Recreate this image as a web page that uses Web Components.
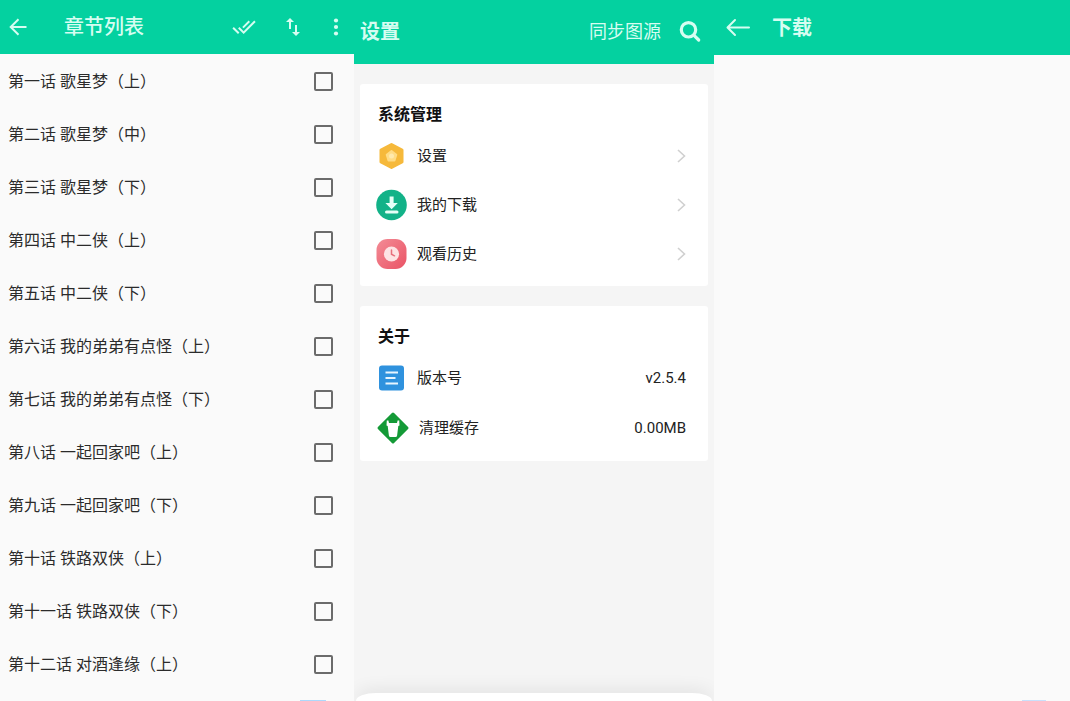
<!DOCTYPE html>
<html lang="zh-CN">
<head>
<meta charset="utf-8">
<meta name="viewport" content="width=device-width, initial-scale=1">
<title>设置</title>
<style>
  body {
    margin: 0;
    font-family: Roboto, "Noto Sans CJK SC", sans-serif;
    font-size: 16px;
    color: #2b2b2b;
    --brand: #04d1a0;
    --on-brand: #d6fdf1;
    --page: #fafafa;
    --page-muted: #f5f5f5;
  }
</style>
</head>
<body>
<comic-app></comic-app>
<script>
const define = (name, html, setup) => {
  const template = document.createElement('template');
  template.innerHTML = html;
  customElements.define(name, class extends HTMLElement {
    constructor() {
      super();
      this.attachShadow({ mode: 'open' }).append(template.content.cloneNode(true));
    }
    connectedCallback() {
      if (setup) setup(this, this.shadowRoot);
    }
  });
};

/* Icon set: name -> [viewBox, markup] */
const ICONS = {
  back: ['0 0 24 24', '<path fill="none" stroke="currentColor" stroke-width="2" d="M20.5 12H5M12.5 4.200L4.700 12l7.800 7.800"/>'],
  backLong: ['0 0 24 24', '<path fill="none" stroke="currentColor" stroke-width="2" stroke-linecap="round" stroke-linejoin="round" d="M23 11.500H2M9 4L1.500 11.500 9 19"/>'],
  doneAll: ['0 0 24 24', '<path fill="currentColor" d="M18 7l-1.410-1.410-6.340 6.340 1.410 1.410L18 7zm4.240-1.410L11.660 16.170 7.480 12l-1.410 1.410L11.660 19l12-12-1.420-1.410zM.410 13.410L6 19l1.410-1.410L1.830 12 .410 13.410z"/>'],
  swap: ['0 0 24 24', '<path fill="currentColor" d="M16 17.010V10h-2v7.010h-3L15 21l4-3.990h-3zM9 3L5 6.990h3V14h2V6.990h3L9 3z"/>'],
  more: ['0 0 24 24', '<g fill="currentColor"><circle cx="12" cy="5.500" r="2.100"/><circle cx="12" cy="12" r="2.100"/><circle cx="12" cy="18.500" r="2.100"/></g>'],
  search: ['0 0 22 22', '<g fill="none" stroke="currentColor" stroke-width="3.200" stroke-linecap="round"><circle cx="9.500" cy="8.800" r="7.200"/><path d="M15 14.300l4.700 4.700"/></g>'],
  chevron: ['0 0 9 14', '<path fill="none" stroke="#d0d0d0" stroke-width="1.600" d="M1 1l6.500 6L1 13"/>'],
  gear: ['0 0 32 32', '<path fill="#f6b93b" stroke="#f6b93b" stroke-width="3" stroke-linejoin="round" d="M15.500 4.500L26 10v12l-10.500 5.500L5 22V10z"/><path fill="#ffdc85" stroke="#ffdc85" stroke-width="2" stroke-linejoin="round" d="M15.500 11l4.800 3.700-1.800 5.800h-6l-1.800-5.800z"/><circle cx="15.500" cy="16" r="2.500" fill="#ffe9ad"/>'],
  download: ['0 0 32 32', '<circle cx="15.500" cy="16" r="15.300" fill="#12b288"/><path fill="#e4fff6" d="M13.600 7.500h4v6.500h4.200l-6.200 6.300-6.200-6.300h4.200z"/><rect x="9" y="21.500" width="13.500" height="3" rx="1.500" fill="#e4fff6"/>'],
  history: ['0 0 32 32', '<defs><linearGradient id="g" x1="0" y1="0" x2="1" y2="1"><stop offset="0" stop-color="#f38c96"/><stop offset="1" stop-color="#ea5365"/></linearGradient></defs><rect x=".5" y="1" width="30" height="30" rx="11" fill="url(#g)"/><circle cx="15.500" cy="16" r="7.600" fill="#fde3e4"/><path fill="none" stroke="#e8707d" stroke-width="1.500" stroke-linecap="round" d="M15.500 12v4.200l3 1.600"/>'],
  version: ['0 0 32 32', '<rect x="3" y="3.500" width="25" height="25" rx="3" fill="#2f92de"/><path stroke="#e8f5ff" stroke-width="2" d="M9.500 10.500h12.500M9.500 16h10M9.500 21.500h12.500"/>'],
  clean: ['0 0 34 34', '<path fill="#149a37" stroke="#149a37" stroke-width="3" stroke-linejoin="round" d="M17 3l14 14-14 14L3 17z"/><path fill="#fff" d="M10.800 9.500h1.600l.600 2.500h8l.600-2.500h1.600l.300 5-1.200.5-1.200 9.500q-.2 1.500-1.600 1.500h-5q-1.400 0-1.600-1.500L11.700 15l-1.200-.5z"/>'],
};

define('app-icon', `
  <style>
    :host { display: inline-flex; flex: none; }
    svg { display: block; }
  </style>
  <svg aria-hidden="true"></svg>`,
  (host, root) => {
    const [box, markup] = ICONS[host.getAttribute('name')];
    const svg = root.querySelector('svg');
    const [, , w, h] = box.split(' ');
    svg.setAttribute('viewBox', box);
    svg.setAttribute('width', w);
    svg.setAttribute('height', h);
    svg.innerHTML = markup;
  });

define('icon-button', `
  <style>
    :host { display: inline-flex; flex: none; }
    button { display: flex; justify-content: center; align-items: center; width: 100%;
      padding: 0; border: 0; background: none; color: inherit; cursor: pointer; }
  </style>
  <button type="button"></button>`,
  (host, root) => {
    const button = root.querySelector('button');
    button.setAttribute('aria-label', host.getAttribute('label'));
    const icon = document.createElement('app-icon');
    icon.setAttribute('name', host.getAttribute('icon'));
    button.replaceChildren(icon);
  });

define('top-bar', `
  <style>
    :host { display: flex; align-items: center; box-sizing: border-box; flex: none;
      background: var(--brand); color: var(--on-brand); }
    h1 { flex: 1; min-width: 0; margin: 0; font-size: 20px; line-height: 28px;
      font-weight: var(--title-weight, 700); white-space: nowrap; }
  </style>
  <slot name="start"></slot><h1><slot></slot></h1><slot name="end"></slot>`);

define('chapter-row', `
  <style>
    :host { display: block; }
    label { display: flex; align-items: center; justify-content: space-between;
      height: 53px; padding: 0 21px 0 8px; line-height: 24px; cursor: pointer; }
    input { appearance: none; flex: none; width: 19px; height: 19px; margin: 0;
      border: 2px solid #6b6b6b; border-radius: 2px; box-sizing: border-box; }
    input:checked { background: var(--brand); }
  </style>
  <label><span><slot></slot></span><input type="checkbox"></label>`);

define('setting-card', `
  <style>
    :host { display: block; background: #fff; border-radius: 3px; padding: 20px 0 8px; }
    h2 { margin: 0 18px 5px; font-size: 16px; line-height: 22px; font-weight: 700; color: #111; }
  </style>
  <h2><slot name="title"></slot></h2>
  <slot></slot>`);

define('setting-row', `
  <style>
    :host { display: flex; align-items: center; height: var(--row-height, 49px);
      padding: 0 22px 0 16px; gap: 9px; font-size: 15px; line-height: 22px; color: #222; }
    .label { flex: 1; }
  </style>
  <slot name="icon"></slot>
  <span class="label"><slot></slot></span>
  <slot name="value"></slot>`);

define('chapter-screen', `
  <style>
    :host { display: flex; flex-direction: column; position: relative; background: var(--page); }
    top-bar { height: 54px; padding: 0 6px; gap: 19px; --title-weight: 500; }
    top-bar [slot=start] { margin-right: 15px; }
    main { padding-top: 1px; }
    .wide { width: 36px; }
    .fab { position: absolute; bottom: 0; right: 28px; width: 26px; height: 1px; background: #add8fb; }
  </style>
  <top-bar>
    <icon-button slot="start" icon="back" label="返回"></icon-button>
    章节列表
    <icon-button slot="end" class="wide" icon="doneAll" label="全选"></icon-button>
    <icon-button slot="end" icon="swap" label="排序"></icon-button>
    <icon-button slot="end" icon="more" label="更多"></icon-button>
  </top-bar>
  <main></main>
  <div class="fab"></div>`,
  (host, root) => {
    const chapters = [
      '第一话 歌星梦（上）', '第二话 歌星梦（中）', '第三话 歌星梦（下）',
      '第四话 中二侠（上）', '第五话 中二侠（下）',
      '第六话 我的弟弟有点怪（上）', '第七话 我的弟弟有点怪（下）',
      '第八话 一起回家吧（上）', '第九话 一起回家吧（下）',
      '第十话 铁路双侠（上）', '第十一话 铁路双侠（下）', '第十二话 对酒逢缘（上）',
    ];
    root.querySelector('main').replaceChildren(...chapters.map((text) => {
      const row = document.createElement('chapter-row');
      row.textContent = text;
      return row;
    }));
  });

define('settings-screen', `
  <style>
    :host { display: flex; flex-direction: column; background: var(--page-muted); }
    top-bar { height: 64px; padding: 0 13px 0 6px; gap: 18px; }
    .sync { padding: 0; border: 0; background: none; color: inherit; cursor: pointer;
      font: inherit; font-size: 18px; line-height: 28px; }
    main { display: flex; flex-direction: column; gap: 20px; padding: 20px 6px; }
    a { color: inherit; text-decoration: none; }
    .about { --row-height: 50px; }
    .sheet-area { margin-top: auto; padding: 24px 2px 0; overflow: hidden; }
    .sheet { height: 8px; background: #fff; border-radius: 20px 20px 0 0 / 8px 8px 0 0;
      box-shadow: 0 0 18px 2px rgba(0, 0, 0, .1); }
  </style>
  <top-bar>设置
    <button slot="end" class="sync" type="button">同步图源</button>
    <icon-button slot="end" icon="search" label="搜索"></icon-button>
  </top-bar>
  <main>
    <setting-card>
      <span slot="title">系统管理</span>
      <setting-row><app-icon slot="icon" name="gear"></app-icon><a href="#settings">设置</a><app-icon slot="value" name="chevron"></app-icon></setting-row>
      <setting-row><app-icon slot="icon" name="download"></app-icon><a href="#downloads">我的下载</a><app-icon slot="value" name="chevron"></app-icon></setting-row>
      <setting-row><app-icon slot="icon" name="history"></app-icon><a href="#history">观看历史</a><app-icon slot="value" name="chevron"></app-icon></setting-row>
    </setting-card>
    <setting-card class="about">
      <span slot="title">关于</span>
      <setting-row><app-icon slot="icon" name="version"></app-icon>版本号<span slot="value">v2.5.4</span></setting-row>
      <setting-row><app-icon slot="icon" name="clean"></app-icon>清理缓存<span slot="value">0.00MB</span></setting-row>
    </setting-card>
  </main>
  <div class="sheet-area"><div class="sheet"></div></div>`);

define('download-screen', `
  <style>
    :host { display: flex; flex-direction: column; position: relative; background: var(--page); }
    top-bar { height: 55px; padding: 0 12px; gap: 22px; }
    .fab { position: absolute; bottom: 0; right: 24px; width: 24px; height: 1px; background: #c9e0fb; }
  </style>
  <top-bar><icon-button slot="start" icon="backLong" label="返回"></icon-button>下载</top-bar>
  <div class="fab"></div>`);

define('comic-app', `
  <style>
    :host { display: grid; grid-template-columns: 354fr 360fr 356fr; min-height: 100vh; }
  </style>
  <chapter-screen></chapter-screen>
  <settings-screen></settings-screen>
  <download-screen></download-screen>`);
</script>
</body>
</html>
